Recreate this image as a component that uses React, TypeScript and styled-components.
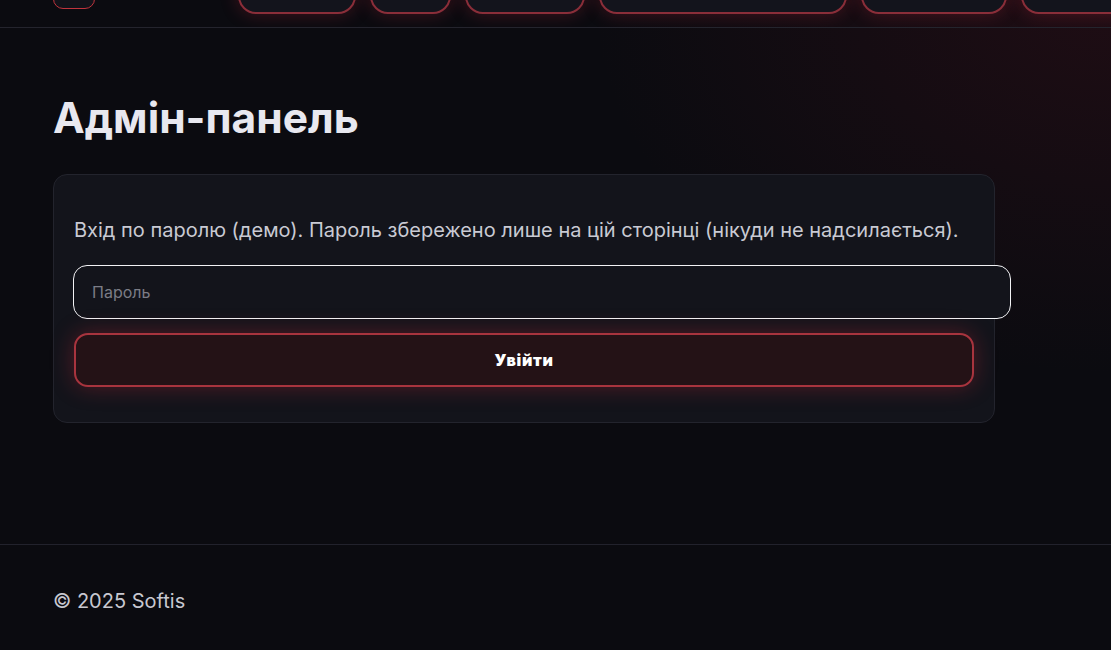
import React from "react";
import styled, { createGlobalStyle } from "styled-components";

const Global = createGlobalStyle`
  html, body { margin: 0; padding: 0; }
  body {
    background: #0b0b10;
    color: #e6e6ec;
    font-family: Inter, "Noto Sans", sans-serif;
  }
`;

const Page = styled.div`
  min-height: 650px;
  background:
    radial-gradient(720px 520px at 100% 0%, rgba(100, 20, 34, 0.22), rgba(100, 20, 34, 0) 72%),
    #0b0b10;
  overflow: hidden;
`;

const Header = styled.header`
  height: 27px;
  border-bottom: 1px solid #24242d;
  display: flex;
  align-items: flex-end;
  padding: 0 0 0 53px;
  overflow: hidden;
`;

const Logo = styled.div`
  flex: none;
  width: 40px;
  height: 40px;
  margin-bottom: 18px;
  border: 1px solid #c0343d;
  border-radius: 10px;
  background: #12131a;
`;

const Nav = styled.nav`
  display: flex;
  gap: 14px;
  margin-left: 143px;
  align-items: flex-end;
`;

const Pill = styled.div<{ $w: number }>`
  flex: none;
  width: ${(p) => p.$w}px;
  height: 44px;
  margin-bottom: 13px;
  box-sizing: border-box;
  border: 2px solid #8a2e39;
  border-radius: 18px;
  background: #13141c;
  box-shadow: 0 0 18px rgba(190, 40, 60, 0.3);
`;

const Main = styled.main`
  padding: 65px 53px 121px;
`;

const Title = styled.h1`
  margin: 0 0 31px;
  font-size: 42.5px;
  line-height: 50px;
  font-weight: 700;
  color: #e8e8ef;
`;

const Card = styled.section`
  width: 942px;
  box-sizing: border-box;
  background: #13141b;
  border: 1px solid #23242d;
  border-radius: 14px;
  padding: 20px 20px 35px;
`;

const Note = styled.p`
  margin: 22px 0 21px;
  font-size: 20px;
  line-height: 27px;
  color: #c9cad3;
`;

const Input = styled.input`
  display: block;
  width: 100%;
  box-sizing: content-box;
  margin: 0 0 14px -1px;
  padding: 16px 18px;
  height: 20px;
  font-family: Inter, "Noto Sans", sans-serif;
  font-size: 16px;
  line-height: 20px;
  color: #e6e6ec;
  background: #13141b;
  border: 1px solid #f2f2f5;
  border-radius: 14px;
  outline: none;
  caret-color: #ffffff;
  &::placeholder { color: #7b7c86; }
`;

const Button = styled.button`
  display: block;
  width: 900px;
  height: 54px;
  box-sizing: border-box;
  border: 2px solid #a8343e;
  border-radius: 14px;
  background: #241216;
  color: #ffffff;
  font-family: Inter, "Noto Sans", sans-serif;
  font-weight: 900;
  font-size: 16px;
  letter-spacing: 0.7px;
  box-shadow: 0 0 22px rgba(200, 40, 55, 0.35);
  cursor: pointer;
`;

const Footer = styled.footer`
  border-top: 1px solid #22222c;
  padding: 41px 53px 40px;
  font-size: 20px;
  line-height: 30px;
  color: #c8c8d0;
`;

export default function App() {
  const pills = [118, 81, 120, 248, 146, 120];
  return (
    <>
      <Global />
      <Page>
        <Header>
          <Logo />
          <Nav>
            {pills.map((w, i) => (
              <Pill key={i} $w={w} />
            ))}
          </Nav>
        </Header>
        <Main>
          <Title>Адмін-панель</Title>
          <Card>
            <Note>
              Вхід по паролю (демо). Пароль збережено лише на цій сторінці
              (нікуди не надсилається).
            </Note>
            <Input type="password" placeholder="Пароль" autoFocus />
            <Button>Увійти</Button>
          </Card>
        </Main>
        <Footer>© 2025 Softis</Footer>
      </Page>
    </>
  );
}
